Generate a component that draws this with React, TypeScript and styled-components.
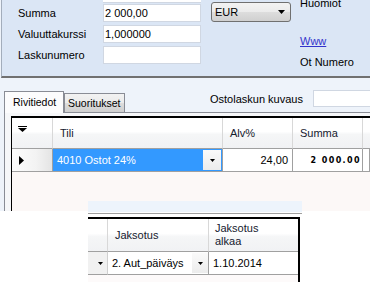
import React from 'react';
import styled, { createGlobalStyle } from 'styled-components';

const Global = createGlobalStyle`
  html, body { margin: 0; padding: 0; background: #fff; }
  body { font-family: "Liberation Sans", Arial, sans-serif; font-size: 11px; color: #000; }
`;

const Page = styled.div`
  width: 370px;
  height: 304px;
  overflow: hidden;
  background: #fff;
`;

/* ---------- first window capture ---------- */
const Shot = styled.div`
  width: 370px;
  height: 211px;
  overflow: hidden;
  background: #eef3fa;
  display: flex;
  flex-direction: column;
`;

const TopPanel = styled.div`
  flex: none;
  margin-left: 1px;
  height: 76px;
  background: #dbe6f5;
  border-left: 1px solid #a3adbb;
  border-bottom: 2px solid #707070;
  display: flex;
  align-items: flex-start;
`;

const LabelCol = styled.div`
  flex: none;
  width: 101px;
  box-sizing: border-box;
  padding: 4px 0 0 16px;
  display: flex;
  flex-direction: column;
  gap: 3px;
`;

const FieldLabel = styled.div`
  height: 18px;
  line-height: 18px;
  white-space: nowrap;
`;

const InputCol = styled.div`
  flex: none;
  width: 98px;
  display: flex;
  flex-direction: column;
  gap: 3px;
`;

const Stub = styled.div`
  height: 2px;
  background: #fff;
  border-bottom: 1px solid #d0d7e2;
  margin-bottom: -2px;
`;

const TextBox = styled.div<{ $w?: number; $h?: number }>`
  box-sizing: border-box;
  width: ${p => (p.$w ? `${p.$w}px` : '100%')};
  height: ${p => p.$h ?? 18}px;
  background: #fff;
  border: 1px solid #d0d7e2;
  padding-left: 1px;
  line-height: ${p => (p.$h ?? 18) - 2}px;
  white-space: nowrap;
  flex: none;
`;

const SelectCol = styled.div`
  flex: none;
  margin-left: 10px;
  padding-top: 2px;
`;

const Combo = styled.div`
  box-sizing: border-box;
  width: 80px;
  height: 20px;
  border: 1px solid #707070;
  border-radius: 3px;
  background: linear-gradient(#f3f3f3 0%, #ebebeb 50%, #dddddd 51%, #d0d0d0 100%);
  display: flex;
  align-items: center;
  justify-content: space-between;
  padding: 0 5px 0 3px;
`;

const RightCol = styled.div`
  flex: none;
  margin-left: 9px;
  margin-top: -4px;
  display: flex;
  flex-direction: column;
`;

const SideText = styled.div<{ $top?: number }>`
  line-height: 14px;
  margin-top: ${p => p.$top ?? 0}px;
  white-space: nowrap;
`;

const Link = styled(SideText)`
  color: #3333cc;
  text-decoration: underline;
`;

const TabStrip = styled.div`
  flex: none;
  height: 34px;
  padding-left: 4px;
  display: flex;
  align-items: flex-end;
`;

const Tab = styled.div<{ $active?: boolean }>`
  flex: none;
  box-sizing: border-box;
  width: ${p => (p.$active ? 60 : 61)}px;
  height: ${p => (p.$active ? 22 : 19)}px;
  margin-bottom: ${p => (p.$active ? -1 : 0)}px;
  position: relative;
  z-index: ${p => (p.$active ? 2 : 1)};
  border: 1px solid #898c95;
  border-bottom: none;
  background: ${p =>
    p.$active ? '#fcfcfd' : 'linear-gradient(#f2f2f2 0%, #ebebeb 50%, #dddddd 51%, #cfcfcf 100%)'};
  padding: ${p => (p.$active ? '4px 0 0 8px' : '3px 0 0 3px')};
  font-size: 10.5px;
  line-height: 13px;
  white-space: nowrap;
  overflow: hidden;
`;

const KuvausGroup = styled.div`
  flex: none;
  align-self: flex-start;
  margin: 12px 0 0 85px;
  height: 17px;
  display: flex;
  align-items: center;
  gap: 10px;
  white-space: nowrap;
`;

const Pane = styled.div`
  flex: 1;
  margin-left: 4px;
  border-left: 1px solid #898c95;
  border-top: 1px solid #898c95;
  background: #f6f7f9;
  padding: 3px 0 0 6px;
  display: flex;
`;

const Grid = styled.div<{ $cols: string; $rows: string }>`
  flex: 1;
  display: grid;
  grid-template-columns: ${p => p.$cols};
  grid-template-rows: ${p => p.$rows};
  align-content: start;
  background: #fcf8f7;
  border-top: 2px solid #000;
  border-left: 1px solid #000;
`;

const HeadCell = styled.div<{ $last?: boolean }>`
  border-right: ${p => (p.$last ? 'none' : '1px solid #d8d8d8')};
  border-bottom: 1px solid #a0a0a0;
  background: linear-gradient(#ffffff 0%, #ffffff 45%, #f5f6f7 55%, #f1f2f4 100%);
  padding-left: 7px;
  display: flex;
  align-items: center;
  color: #15202e;
  line-height: 13px;
  white-space: nowrap;
`;

const CornerCell = styled(HeadCell)`
  align-items: flex-start;
  padding: 8px 0 0 6px;
`;

const Cell = styled.div<{ $align?: 'start' | 'end'; $pad?: number }>`
  border-right: 1px solid #a0a0a0;
  border-bottom: 1px solid #a0a0a0;
  background: #fff;
  display: flex;
  align-items: center;
  justify-content: ${p => (p.$align === 'end' ? 'flex-end' : 'flex-start')};
  padding: ${p => (p.$align === 'end' ? `0 ${p.$pad ?? 4}px 0 0` : `0 0 0 ${p.$pad ?? 4}px`)};
  white-space: nowrap;
  min-width: 0;
`;

const RowHead = styled(Cell)`
  background: linear-gradient(to right, #fdfdfd 0%, #f3f3f3 60%, #e4e4e4 100%);
  padding-left: 7px;
`;

const SelectedCell = styled(Cell)`
  background: #3399ff;
  color: #fff;
  justify-content: space-between;
  padding: 0 1px 0 4px;
`;

const DropBtn = styled.div<{ $w: number }>`
  width: ${p => p.$w}px;
  align-self: stretch;
  margin: 1px 0;
  background: linear-gradient(#fafafa, #ececec);
  display: flex;
  align-items: center;
  justify-content: center;
  flex: none;
`;

const ComboCell = styled(Cell)`
  justify-content: space-between;
  padding-right: 0;
`;

const ArrowOnlyCell = styled(Cell)`
  background: #f1f1f1;
  justify-content: flex-end;
  padding: 0 4px 0 0;
  border-right-color: #d0d0d0;
`;

const WideNum = styled.span`
  font-family: "DejaVu Sans", sans-serif;
  font-weight: bold;
  font-size: 8px;
  letter-spacing: 1.4px;
`;

/* ---------- second capture pasted below ---------- */
const Shot2 = styled.div`
  position: relative;
  z-index: 3;
  margin: -10px 0 0 88px;
  width: 214px;
  height: 81px;
  background: #fff;
  display: flex;
  flex-direction: column;
`;

const Band = styled.div`
  height: 11px;
  background: #edf4fc;
  border-bottom: 1px solid #fff;
  flex: none;
`;

const Rule = styled.div`
  border-top: 1px solid #a0a0a0;
  margin-bottom: 3px;
  flex: none;
`;

const Grid2 = styled(Grid)`
  flex: none;
  width: 212px;
  height: 65px;
  box-sizing: border-box;
  border-left: none;
  border-right: 2px solid #000;
  background: #fdfafa;
`;

/* ---------- icons ---------- */
const SmallArrow = () => (
  <svg width="5" height="3" viewBox="0 0 5 3"><polygon points="0,0 5,0 2.5,3" fill="#000" /></svg>
);
const ComboArrow = () => (
  <svg width="7" height="4" viewBox="0 0 7 4"><polygon points="0,0 7,0 3.5,4" fill="#000" /></svg>
);
const RowPointer = () => (
  <svg width="5" height="9" viewBox="0 0 5 9"><polygon points="0,0 5,4.5 0,9" fill="#000" /></svg>
);
const FilterIcon = () => (
  <svg width="9" height="6" viewBox="0 0 9 6">
    <rect x="0" y="0" width="9" height="1" fill="#000" />
    <polygon points="0,2 9,2 4.5,6" fill="#000" />
  </svg>
);

export default function App() {
  return (
    <Page>
      <Global />
      <Shot>
        <TopPanel>
          <LabelCol>
            <FieldLabel>Summa</FieldLabel>
            <FieldLabel>Valuuttakurssi</FieldLabel>
            <FieldLabel>Laskunumero</FieldLabel>
          </LabelCol>
          <InputCol>
            <Stub />
            <TextBox>2 000,00</TextBox>
            <TextBox>1,000000</TextBox>
            <TextBox />
          </InputCol>
          <SelectCol>
            <Combo>
              <span>EUR</span>
              <ComboArrow />
            </Combo>
          </SelectCol>
          <RightCol>
            <SideText>Huomiot</SideText>
            <Link $top={24}>Www</Link>
            <SideText $top={7}>Ot Numero</SideText>
          </RightCol>
        </TopPanel>
        <TabStrip>
          <Tab $active>Rivitiedot</Tab>
          <Tab>Suoritukset</Tab>
          <KuvausGroup>
            <span>Ostolaskun kuvaus</span>
            <TextBox $w={70} $h={17} />
          </KuvausGroup>
        </TabStrip>
        <Pane>
          <Grid $cols="41px 170px 70px 70px 1fr" $rows="31px 23px">
            <CornerCell><FilterIcon /></CornerCell>
            <HeadCell>Tili</HeadCell>
            <HeadCell>Alv%</HeadCell>
            <HeadCell>Summa</HeadCell>
            <HeadCell $last />
            <RowHead><RowPointer /></RowHead>
            <SelectedCell>
              <span>4010 Ostot 24%</span>
              <DropBtn $w={18}><SmallArrow /></DropBtn>
            </SelectedCell>
            <Cell $align="end">24,00</Cell>
            <Cell $align="end" $pad={1}><WideNum>2 000.00</WideNum></Cell>
            <Cell />
          </Grid>
        </Pane>
      </Shot>
      <Shot2>
        <Band />
        <Rule />
        <Grid2 $cols="20px 101px 89px" $rows="33px 23px">
          <HeadCell />
          <HeadCell>Jaksotus</HeadCell>
          <HeadCell $last style={{ paddingLeft: 6 }}>Jaksotus<br />alkaa</HeadCell>
          <ArrowOnlyCell><SmallArrow /></ArrowOnlyCell>
          <ComboCell>
            <span>2. Aut_päiväys</span>
            <DropBtn $w={16}><SmallArrow /></DropBtn>
          </ComboCell>
          <Cell style={{ borderRight: 'none' }}>1.10.2014</Cell>
        </Grid2>
      </Shot2>
    </Page>
  );
}
